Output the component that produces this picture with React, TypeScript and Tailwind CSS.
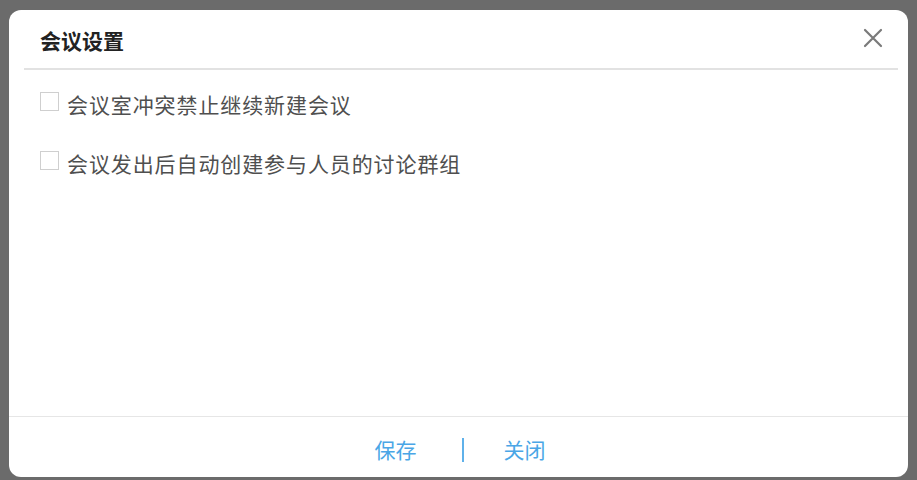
const options = [
    "会议室冲突禁止继续新建会议",
    "会议发出后自动创建参与人员的讨论群组",
];

const CloseIcon = () => (
    <svg width="20" height="20" viewBox="0 0 20 20" className="-mt-[5px]">
        <path d="M2 2 L18 18 M18 2 L2 18" stroke="#7a7a7a" strokeWidth="2.2" strokeLinecap="round" />
    </svg>
);

const App = () => {
    return (
        <div
            className="w-[917px] h-[480px] bg-[#6b6b6b] pt-[10px] pl-[9px] pr-[9px] pb-[3px]"
            style={{ fontFamily: '"Noto Sans CJK SC", "Noto Sans", sans-serif' }}
        >
            <div className="h-full flex flex-col bg-white rounded-[12px]">
                {/* Header */}
                <div className="h-[58px] pt-[3px] flex items-center justify-between pl-[31px] pr-[25px]">
                    <span className="text-[21px] font-bold text-[#222]">会议设置</span>
                    <CloseIcon />
                </div>
                <div className="h-[2px] bg-[#e2e2e2] ml-[15px] mr-[10px]" />

                {/* Body */}
                <div className="flex-1 flex flex-col gap-[40px] pl-[31px] pt-[22px]">
                    {options.map((label) => (
                        <label key={label} className="flex items-center gap-[8px] h-[19px]">
                            <span className="w-[19px] h-[19px] border-[1.5px] border-[#cfcfcf] bg-white" />
                            <span className="text-[21px] tracking-[0.9px] text-[#4f4f4f] mt-[6px]">{label}</span>
                        </label>
                    ))}
                </div>

                {/* Footer */}
                <div className="h-[1px] bg-[#e6e6e6]" />
                <div className="h-[60px] pt-[6px] flex items-center justify-center">
                    <button className="text-[21px] text-[#4aa6e6] pl-[3px]">保存</button>
                    <span className="w-[2px] h-[24px] bg-[#5fb1ea] ml-[45px] mr-[40px]" />
                    <button className="text-[21px] text-[#4aa6e6]">关闭</button>
                </div>
            </div>
        </div>
    );
};

export default App;
